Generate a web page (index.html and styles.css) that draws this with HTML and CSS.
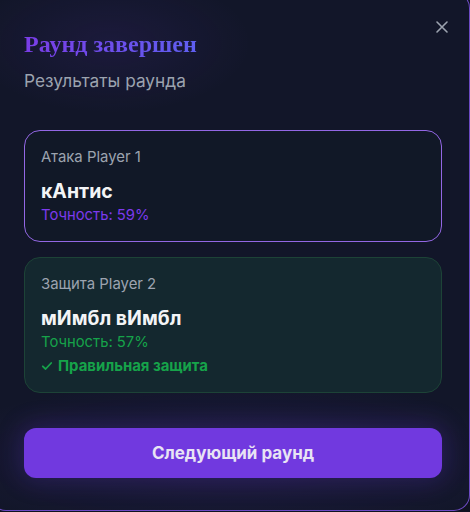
FILE: index.html
```html
<!DOCTYPE html>
<html lang="ru">
<head>
<meta charset="utf-8">
<link rel="stylesheet" href="styles.css">
</head>
<body>
<div class="modal">
  <button class="close" aria-label="Закрыть">
    <svg width="14" height="14" viewBox="0 0 14 14"><path d="M2 2L12 12M12 2L2 12" stroke="#9ca3af" stroke-width="1.6" stroke-linecap="round"/></svg>
  </button>
  <h1 class="title">Раунд завершен</h1>
  <p class="subtitle">Результаты раунда</p>
  <div class="cards">
    <div class="card card-attack">
      <div class="label">Атака Player 1</div>
      <div class="name">кАнтис</div>
      <div class="acc acc-purple">Точность: 59%</div>
    </div>
    <div class="card card-defense">
      <div class="label">Защита Player 2</div>
      <div class="name">мИмбл вИмбл</div>
      <div class="acc acc-green">Точность: 57%</div>
      <div class="result">
        <svg width="12" height="12" viewBox="0 0 12 12"><path d="M1.8 6.3L4.6 9L10.2 3" fill="none" stroke="#16a34a" stroke-width="1.8" stroke-linecap="round" stroke-linejoin="round"/></svg>
        <span>Правильная защита</span>
      </div>
    </div>
  </div>
  <button class="next">Следующий раунд</button>
</div>
</body>
</html>
```
FILE: styles.css
```css
html, body {
  margin: 0;
  padding: 0;
}
body {
  width: 470px;
  height: 512px;
  overflow: hidden;
  background: #0f1220;
  font-family: Inter, "Noto Sans", sans-serif;
}
.modal {
  position: relative;
  box-sizing: border-box;
  width: 480px;
  height: 519px;
  margin: -8px 0 0 -10px;
  padding: 35px 27px 0 33px;
  border: 1px solid rgba(139, 92, 246, 0.75);
  border-radius: 16px;
  background:
    radial-gradient(ellipse 140px 70px at 120px 50px, rgba(109, 58, 223, 0.10), rgba(109, 58, 223, 0) 100%),
    radial-gradient(ellipse 300px 80px at 240px 465px, rgba(109, 58, 223, 0.12), rgba(109, 58, 223, 0) 100%),
    #121629;
}
.close {
  position: absolute;
  top: 27px;
  right: 20px;
  width: 14px;
  height: 14px;
  padding: 0;
  border: 0;
  background: none;
  display: flex;
}
.title {
  margin: 0;
  font-family: "Liberation Serif", serif;
  font-weight: bold;
  font-size: 24px;
  line-height: 32px;
  background: linear-gradient(90deg, #7a3de6, #5f5ff0);
  -webkit-background-clip: text;
  background-clip: text;
  color: transparent;
  width: max-content;
}
.subtitle {
  margin: 9px 0 0;
  font-size: 17.3px;
  line-height: 24px;
  color: #9ca3af;
}
.cards {
  margin-top: 37px;
  display: flex;
  flex-direction: column;
  gap: 15px;
}
.card {
  border-radius: 16px;
  padding: 16px;
  border: 1px solid;
}
.card-attack {
  background: #111827;
  border-color: #9367e4;
}
.card-defense {
  background: #14282f;
  border-color: #1d4337;
}
.label {
  font-size: 14.9px;
  line-height: 20px;
  color: #9ca3af;
}
.name {
  margin-top: 10px;
  font-size: 19.5px;
  line-height: 28px;
  font-weight: bold;
  color: #f3f4f6;
}
.acc {
  font-size: 14.8px;
  line-height: 20px;
}
.acc-purple { color: #7c3aed; }
.acc-green { color: #16a34a; }
.result {
  margin-top: 4px;
  display: flex;
  align-items: center;
  gap: 5px;
  font-size: 14.9px;
  line-height: 20px;
  font-weight: bold;
  color: #16a34a;
}
.next {
  display: block;
  width: 100%;
  height: 50px;
  margin-top: 35px;
  border: 0;
  border-radius: 12px;
  background: #7139df;
  color: #e8e4f4;
  font-family: Inter, "Noto Sans", sans-serif;
  font-size: 17px;
  font-weight: bold;
  box-shadow: 0 0 24px 4px rgba(109, 58, 223, 0.22);
}
```
